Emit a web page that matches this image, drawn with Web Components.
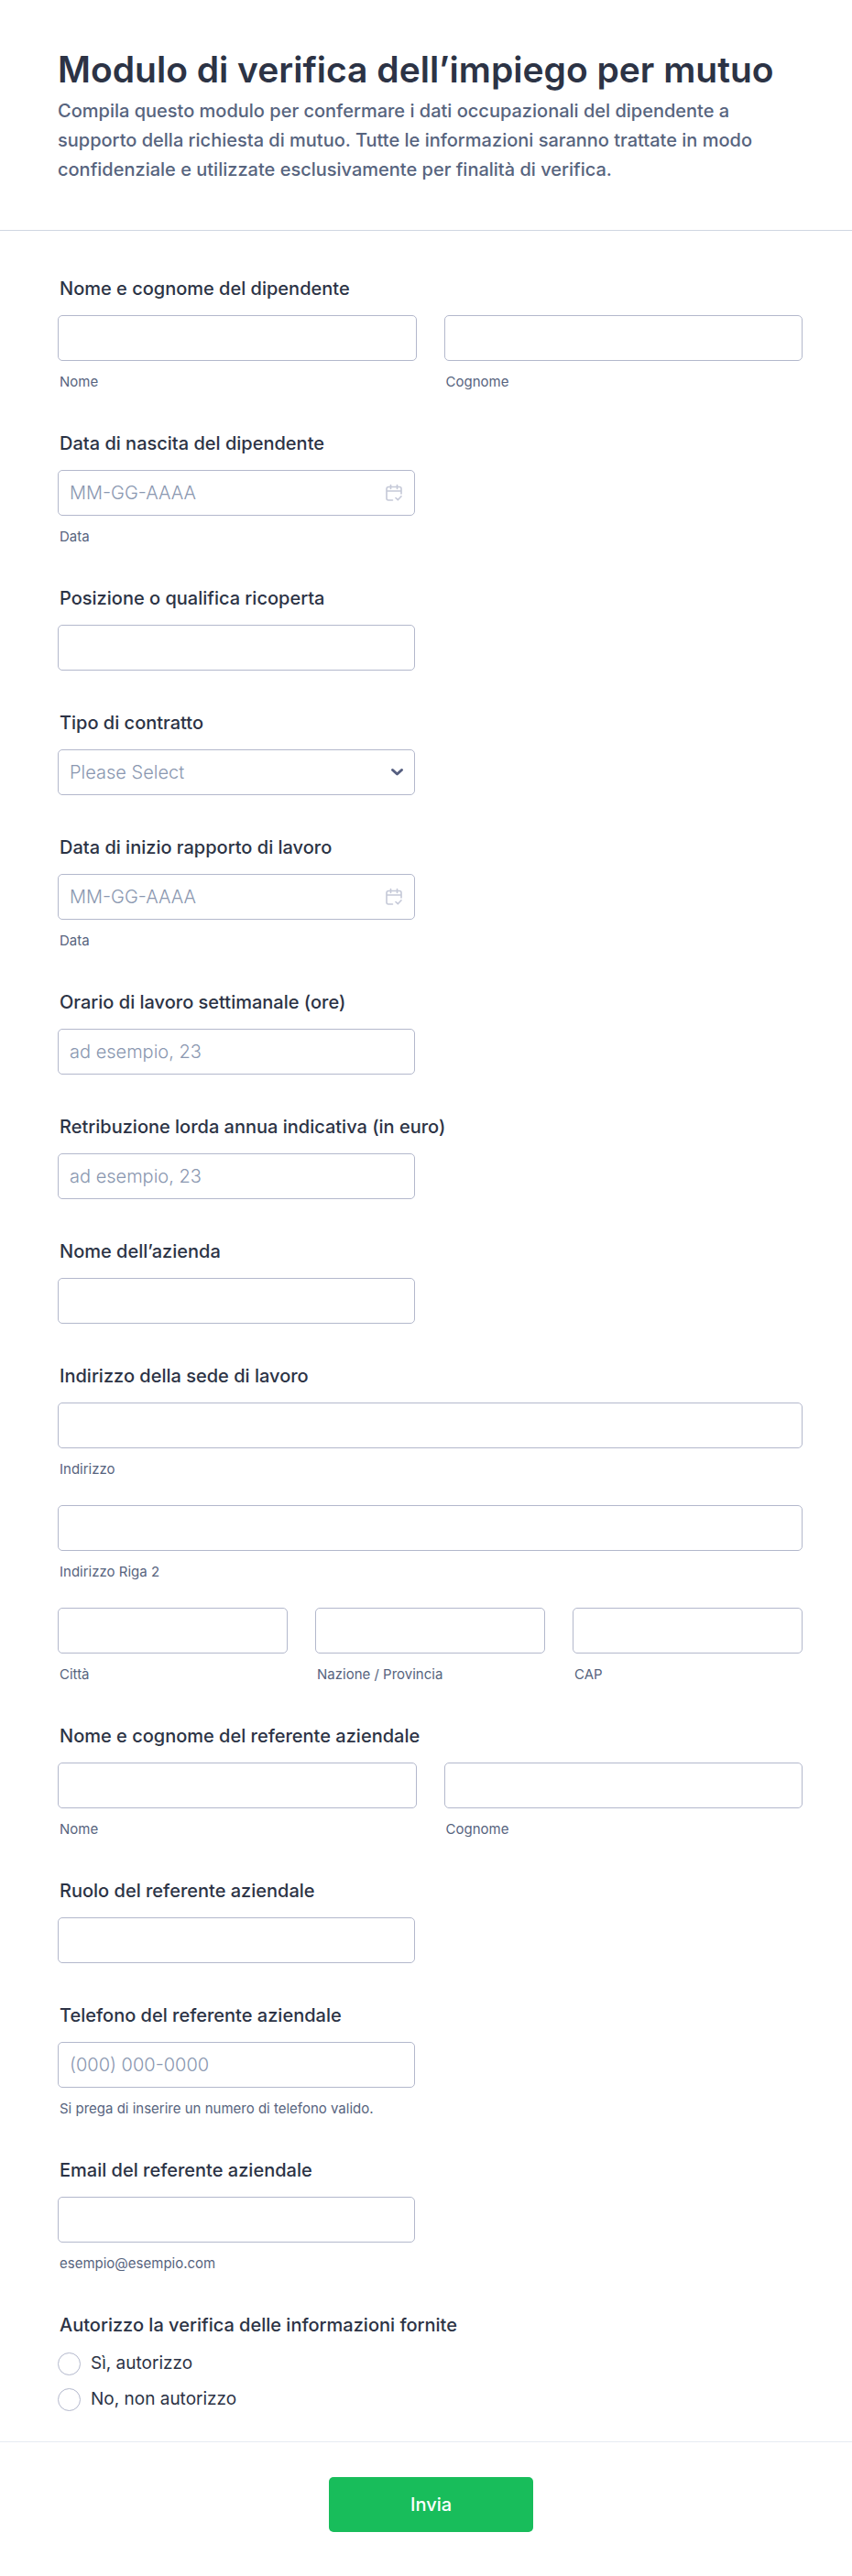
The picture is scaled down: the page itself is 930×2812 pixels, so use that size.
<!DOCTYPE html>
<html lang="it">
<head>
<meta charset="utf-8">
<meta name="viewport" content="width=device-width, initial-scale=1">
<title>Modulo di verifica dell’impiego per mutuo</title>
<style>
  body {
    margin: 0;
    background: #fff;
    color: #2c3345;
    font-family: Inter, "Liberation Sans", sans-serif;
    --muted: #57647e;
    --placeholder: #8a97b0;
    --field-border: #b3b8cc;
    --accent: #18bd5b;
    --edge-left: 63px;
    --edge-right: 54px;
  }
</style>
</head>
<body>
<form-page>
  <form-header slot="header">
    <span slot="title">Modulo di verifica dell’impiego per mutuo</span>
    <span slot="text">Compila questo modulo per confermare i dati occupazionali del dipendente a supporto della richiesta di mutuo. Tutte le informazioni saranno trattate in modo confidenziale e utilizzate esclusivamente per finalità di verifica.</span>
  </form-header>

  <question-group label="Nome e cognome del dipendente" rows="Nome|Cognome"></question-group>
  <question-field label="Data di nascita del dipendente" kind="date" placeholder="MM-GG-AAAA" hint="Data"></question-field>
  <question-field label="Posizione o qualifica ricoperta"></question-field>
  <question-field label="Tipo di contratto" kind="select" placeholder="Please Select"></question-field>
  <question-field label="Data di inizio rapporto di lavoro" kind="date" placeholder="MM-GG-AAAA" hint="Data"></question-field>
  <question-field label="Orario di lavoro settimanale (ore)" placeholder="ad esempio, 23"></question-field>
  <question-field label="Retribuzione lorda annua indicativa (in euro)" placeholder="ad esempio, 23"></question-field>
  <question-field label="Nome dell’azienda"></question-field>
  <question-group label="Indirizzo della sede di lavoro" rows="Indirizzo;Indirizzo Riga 2;Città|Nazione / Provincia|CAP"></question-group>
  <question-group label="Nome e cognome del referente aziendale" rows="Nome|Cognome"></question-group>
  <question-field label="Ruolo del referente aziendale"></question-field>
  <question-field label="Telefono del referente aziendale" type="tel" placeholder="(000) 000-0000" hint="Si prega di inserire un numero di telefono valido."></question-field>
  <question-field label="Email del referente aziendale" type="email" hint="esempio@esempio.com"></question-field>
  <question-choice label="Autorizzo la verifica delle informazioni fornite" options="Sì, autorizzo|No, non autorizzo"></question-choice>

  <submit-bar slot="footer">Invia</submit-bar>
</form-page>

<script>
const sharedStyles = `
  *, *::before, *::after { box-sizing: border-box; }
  :host { display: block; }
  .question { margin: 0 0 15px; padding-left: 2px; display: block; font-size: 20px; line-height: 28px; font-weight: 500; }
  .hint { display: block; margin-top: 13px; padding-left: 2px; font-size: 15px; line-height: 20px; color: var(--muted); }
  input[type=text], input[type=tel], input[type=email], select {
    display: block; width: 100%; height: 50px; margin: 0; padding: 0 12px;
    border: 1px solid var(--field-border); border-radius: 5px; background: #fff;
    color: inherit; font-family: inherit; font-size: 20px; font-weight: 300; outline-color: var(--accent);
    appearance: none;
  }
  input::placeholder { color: var(--placeholder); opacity: 1; }
`;

class BaseElement extends HTMLElement {
  connectedCallback() {
    if (this.shadowRoot) return;
    this.attachShadow({ mode: 'open' }).innerHTML = `<style>${sharedStyles}${this.styles()}</style>${this.markup()}`;
  }
  attr(name) { return this.getAttribute(name) || ''; }
}

customElements.define('form-page', class extends BaseElement {
  styles() { return `
    .questions { display: grid; gap: 43px; padding: 49px var(--edge-right) 33px var(--edge-left); }
  `; }
  markup() { return `<form><slot name="header"></slot><div class="questions"><slot></slot></div><slot name="footer"></slot></form>`; }
});

customElements.define('form-header', class extends BaseElement {
  styles() { return `
    :host { padding: 52px var(--edge-right) 50px var(--edge-left); border-bottom: 1px solid #d0d7e2; }
    h1 { margin: 0 0 5px; font-size: 39px; line-height: 48px; font-weight: 600; font-variation-settings: "opsz" 32; }
    p { margin: 0; font-size: 20px; line-height: 32px; font-weight: 500; color: var(--muted); }
  `; }
  markup() { return `<header><h1><slot name="title"></slot></h1><p><slot name="text"></slot></p></header>`; }
});

customElements.define('question-field', class extends BaseElement {
  styles() { return `
    .control { display: grid; width: 48%; align-items: center; }
    .control > * { grid-area: 1 / 1; }
    svg { justify-self: end; pointer-events: none; }
    .calendar { margin-right: 14px; }
    .chevron { margin-right: 12px; }
    select { color: var(--placeholder); }
  `; }
  markup() {
    const kind = this.attr('kind');
    const described = this.attr('hint') ? ' aria-describedby="hint"' : '';
    const control = kind === 'select'
      ? `<select id="control"><option>${this.attr('placeholder')}</option></select>
         <svg class="chevron" width="15" height="10" viewBox="0 0 15 10" fill="none" stroke="#565f80" stroke-width="3" stroke-linecap="round" stroke-linejoin="round"><path d="M2.5 2.5l5 4.5 5-4.5"/></svg>`
      : `<input id="control" type="${this.attr('type') || 'text'}" placeholder="${this.attr('placeholder')}"${described}>`;
    const icon = kind === 'date'
      ? `<svg class="calendar" width="18" height="20" viewBox="0 0 18 20" fill="none" stroke="#c5c9d8" stroke-width="1.6" stroke-linecap="round" stroke-linejoin="round"><path d="M7.5 18H3a2 2 0 0 1-2-2V5.500a2 2 0 0 1 2-2h12a2 2 0 0 1 2 2V11M1 8h16M5.500 1.500v4M12.500 1.500v4M11 15.500l2.300 2.300L17 13.800"/></svg>`
      : '';
    return `<label class="question" for="control">${this.attr('label')}</label>
      <div class="control">${control}${icon}</div>
      ${this.attr('hint') ? `<span class="hint" id="hint">${this.attr('hint')}</span>` : ''}`;
  }
});

customElements.define('question-group', class extends BaseElement {
  styles() { return `
    .rows { display: grid; gap: 29px; }
    .row { display: grid; grid-auto-flow: column; grid-auto-columns: minmax(0, 1fr); gap: 30px; }
  `; }
  markup() {
    let id = 0;
    const rows = this.attr('rows').split(';').map(row => `<div class="row">${row.split('|').map(name => {
      id += 1;
      return `<div><input id="part${id}" type="text"><label class="hint" for="part${id}">${name}</label></div>`;
    }).join('')}</div>`).join('');
    return `<div role="group" aria-labelledby="title"><span class="question" id="title">${this.attr('label')}</span><div class="rows">${rows}</div></div>`;
  }
});

customElements.define('question-choice', class extends BaseElement {
  styles() { return `
    .options { display: grid; gap: 13px; justify-items: start; }
    .option { display: flex; align-items: center; gap: 11px; font-size: 19px; line-height: 26px; }
    input { appearance: none; width: 25px; height: 25px; margin: 0; border: 1px solid var(--field-border); border-radius: 50%; background: #fff; }
    input:checked { border: 7px solid var(--accent); }
  `; }
  markup() {
    const options = this.attr('options').split('|').map(text =>
      `<label class="option"><input type="radio" name="choice" value="${text}"><span>${text}</span></label>`).join('');
    return `<div role="radiogroup" aria-labelledby="title"><span class="question" id="title">${this.attr('label')}</span><div class="options">${options}</div></div>`;
  }
});

customElements.define('submit-bar', class extends BaseElement {
  styles() { return `
    :host { display: flex; justify-content: center; padding: 38px 52px 48px 63px; border-top: 1px solid #e6ebf2; }
    button { min-width: 223px; height: 60px; padding: 0 24px; border: 0; border-radius: 5px; background: var(--accent); color: #fff; font-family: inherit; font-size: 20px; font-weight: 500; cursor: pointer; }
  `; }
  markup() { return `<button type="submit"><slot></slot></button>`; }
});
</script>
</body>
</html>
